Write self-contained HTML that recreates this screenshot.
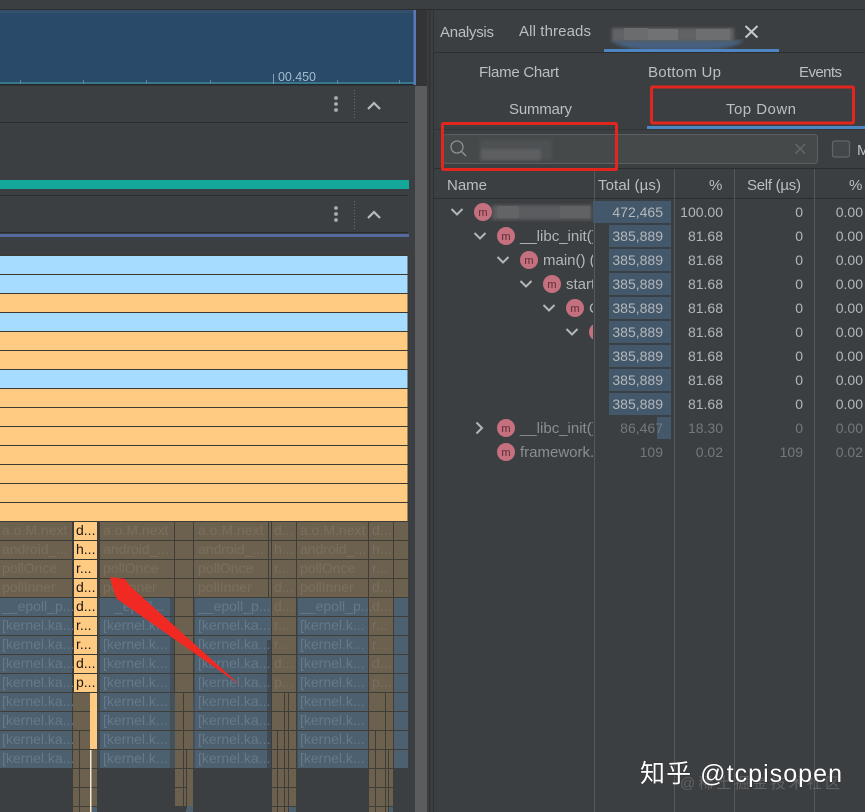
<!DOCTYPE html>
<html>
<head>
<meta charset="utf-8">
<style>
html,body{margin:0;padding:0;background:#3c3f41;width:865px;height:812px;overflow:hidden}
svg{display:block;font-family:"Liberation Sans","Noto Sans CJK SC",sans-serif;filter:blur(.3px)}
.d{fill:#7a6f5c;font-size:14px}
.k{fill:#65798a;font-size:14px}
.b{fill:#1c1710;font-size:14px}
.t{fill:#bcbfc1;font-size:15px}
.h{fill:#b4b7b9;font-size:15px}
.n{fill:#b4b7b9;font-size:14px;text-anchor:end}
.g{fill:#75787a;font-size:14px;text-anchor:end}
.m{fill:#5c2b33;font-size:11px;text-anchor:middle}
.c{fill:none;stroke:#b4b7b9;stroke-width:2}
</style>
</head>
<body>
<svg width="865" height="812" viewBox="0 0 865 812" xmlns="http://www.w3.org/2000/svg">
<defs>
<clipPath id="nc"><rect x="434" y="198" width="159" height="270"/></clipPath>
<filter id="bl"><feGaussianBlur stdDeviation="1.5"/></filter>
</defs>
<rect width="865" height="812" fill="#3c3f41"/>
<!-- top band -->
<rect x="0" y="9" width="865" height="1" fill="#2b2d2e"/>
<rect x="0" y="10" width="414" height="75" fill="#294a68"/>
<rect x="0" y="10" width="414" height="3" fill="#34506c"/>
<rect x="0" y="82" width="414" height="2" fill="#38788c"/>
<rect x="0" y="84" width="416" height="1.500" fill="#25282a"/>
<rect x="413.500" y="10" width="2.500" height="75" fill="#5b79b6"/>
<rect x="416" y="10" width="12" height="76" fill="#323435"/>
<g fill="#5f8296">
<rect x="20" y="80" width="1" height="4"/><rect x="83" y="80" width="1" height="4"/><rect x="146" y="80" width="1" height="4"/><rect x="210" y="80" width="1" height="4"/><rect x="337" y="80" width="1" height="4"/><rect x="399" y="80" width="1" height="4"/>
</g>
<rect x="273" y="74" width="1" height="10" fill="#7f9db2"/>
<text x="278" y="81" font-size="12.500" fill="#a2bbcf" textLength="38" lengthAdjust="spacing">00.450</text>
<!-- scrollbar -->
<rect x="415" y="86" width="12" height="726" fill="#5a5c5d"/>
<rect x="427" y="10" width="2" height="802" fill="#3a3c3e"/>
<rect x="429" y="10" width="1.500" height="802" fill="#313335"/>
<rect x="430.500" y="10" width="3" height="802" fill="#3c3f41"/>
<rect x="433" y="10" width="1" height="802" fill="#2f3132"/>
<!-- track headers -->
<rect x="0" y="122" width="408" height="1" fill="#2a2c2d"/>
<g fill="#a9abad">
<circle cx="336" cy="98" r="1.900"/><circle cx="336" cy="104" r="1.900"/><circle cx="336" cy="110" r="1.900"/>
<circle cx="336" cy="208" r="1.900"/><circle cx="336" cy="214" r="1.900"/><circle cx="336" cy="220" r="1.900"/>
</g>
<path d="M354.500 90V118M354.500 201V230" stroke="#6a6d6f" stroke-width="1" stroke-dasharray="1 2"/>
<path d="M368 109L374 103L380 109M368 218L374 212L380 218" fill="none" stroke="#b8babc" stroke-width="2.200"/>
<rect x="0" y="180" width="409" height="9" fill="#13a89a"/>
<rect x="0" y="195" width="408" height="1" fill="#2a2c2d"/>
<rect x="0" y="232" width="408" height="1" fill="#2a2c2d"/>
<rect x="0" y="234" width="409" height="3" fill="#56699e"/>
<!-- flame bright rows -->
<g stroke="#3d3a34" stroke-width="1">
<rect x="-1" y="255.500" width="409" height="19" fill="#a6dcff"/>
<rect x="-1" y="274.500" width="409" height="19" fill="#a6dcff"/>
<rect x="-1" y="293.500" width="409" height="19" fill="#ffcb82"/>
<rect x="-1" y="312.500" width="409" height="19" fill="#a6dcff"/>
<rect x="-1" y="331.500" width="409" height="19" fill="#ffcb82"/>
<rect x="-1" y="350.500" width="409" height="19" fill="#ffcb82"/>
<rect x="-1" y="369.500" width="409" height="19" fill="#a6dcff"/>
<rect x="-1" y="388.500" width="409" height="19" fill="#ffcb82"/>
<rect x="-1" y="407.500" width="409" height="19" fill="#ffcb82"/>
<rect x="-1" y="426.500" width="409" height="19" fill="#ffcb82"/>
<rect x="-1" y="445.500" width="409" height="19" fill="#ffcb82"/>
<rect x="-1" y="464.500" width="409" height="19" fill="#ffcb82"/>
<rect x="-1" y="483.500" width="409" height="19" fill="#ffcb82"/>
<rect x="-1" y="502.500" width="409" height="19" fill="#ffcb82"/>
</g>
<!-- dim lower band -->
<rect x="0" y="521" width="408" height="76" fill="#6c604e"/>
<rect x="0" y="597" width="408" height="171" fill="#4c6070"/>
<rect x="73" y="597" width="27" height="171" fill="#4a5560"/>
<rect x="170" y="597" width="5" height="171" fill="#44505a"/>
<rect x="193" y="597" width="2" height="171" fill="#44505a"/>
<rect x="267" y="640" width="5" height="128" fill="#3f4a54"/>
<rect x="296" y="597" width="2" height="171" fill="#44505a"/>
<rect x="368" y="597" width="2" height="171" fill="#44505a"/>
<!-- brown columns -->
<rect x="175" y="597" width="18" height="95" fill="#6c604e"/>
<rect x="271" y="597" width="25" height="95" fill="#6c604e"/>
<rect x="369" y="597" width="24" height="95" fill="#6c604e"/>
<rect x="73" y="692" width="24" height="120" fill="#6c604e"/>
<rect x="175" y="692" width="18" height="120" fill="#6c604e"/>
<rect x="272" y="692" width="24" height="120" fill="#6c604e"/>
<rect x="369" y="692" width="24" height="120" fill="#6c604e"/>
<rect x="92" y="806" width="5" height="6" fill="#4c6070"/>
<rect x="175" y="806" width="11" height="6" fill="#3c3f41"/>
<rect x="186" y="806" width="7" height="6" fill="#4c6070"/>
<rect x="288" y="806" width="8" height="6" fill="#4c6070"/>
<rect x="388" y="806" width="5" height="6" fill="#4c6070"/>
<!-- horizontal row lines -->
<g fill="#3f3d38">
<rect x="0" y="521" width="408" height="1"/><rect x="0" y="540" width="408" height="1"/><rect x="0" y="559" width="408" height="1"/><rect x="0" y="578" width="408" height="1"/><rect x="0" y="597" width="408" height="1"/><rect x="0" y="616" width="408" height="1"/><rect x="0" y="635" width="408" height="1"/><rect x="0" y="654" width="408" height="1"/><rect x="0" y="673" width="408" height="1"/><rect x="0" y="692" width="408" height="1"/><rect x="0" y="711" width="408" height="1"/><rect x="0" y="730" width="408" height="1"/><rect x="0" y="749" width="408" height="1"/>
<rect x="73" y="768" width="24" height="1"/><rect x="175" y="768" width="18" height="1"/><rect x="271" y="768" width="25" height="1"/><rect x="369" y="768" width="24" height="1"/>
<rect x="73" y="787" width="24" height="1"/><rect x="175" y="787" width="11" height="1"/><rect x="271" y="787" width="25" height="1"/><rect x="369" y="787" width="24" height="1"/>
<rect x="73" y="806" width="24" height="1"/><rect x="271" y="806" width="25" height="1"/><rect x="369" y="806" width="24" height="1"/>
</g>
<!-- vertical dividers -->
<g fill="#3f3d38">
<rect x="72" y="521" width="1" height="291"/><rect x="98" y="521" width="2" height="76"/><rect x="174" y="521" width="1" height="171"/><rect x="193" y="521" width="1" height="171"/><rect x="268" y="521" width="1" height="76"/><rect x="271" y="521" width="1" height="291"/><rect x="296" y="521" width="1" height="291"/><rect x="368" y="521" width="1" height="291"/><rect x="393" y="521" width="1" height="247"/>
<rect x="79" y="730" width="1" height="82"/><rect x="183" y="692" width="1" height="120"/><rect x="186" y="749" width="1" height="60"/><rect x="277" y="730" width="1" height="82"/><rect x="284" y="692" width="1" height="120"/><rect x="288" y="692" width="1" height="120"/><rect x="375" y="730" width="1" height="82"/><rect x="385" y="692" width="1" height="120"/><rect x="388" y="749" width="1" height="63"/>
</g>
<!-- bright yellow col -->
<g fill="#ffcb82" stroke="#3d3a34" stroke-width="1">
<rect x="73.500" y="521.500" width="24" height="19"/><rect x="73.500" y="540.500" width="24" height="19"/><rect x="73.500" y="559.500" width="24" height="19"/><rect x="73.500" y="578.500" width="24" height="19"/><rect x="73.500" y="597.500" width="24" height="19"/><rect x="73.500" y="616.500" width="24" height="19"/><rect x="73.500" y="635.500" width="24" height="19"/><rect x="73.500" y="654.500" width="24" height="19"/><rect x="73.500" y="673.500" width="24" height="19"/>
</g>
<rect x="90" y="693" width="7" height="56" fill="#ffcb82"/>
<rect x="90" y="750" width="1.500" height="62" fill="#f4e6c8"/>
<rect x="97" y="597" width="3" height="215" fill="#3c3f41" opacity=".55"/>
<!-- dim text -->
<text class="d" x="2" y="535">a.o.M.next</text><text class="d" x="2" y="554">android_...</text><text class="d" x="2" y="573">pollOnce</text><text class="d" x="2" y="592">pollInner</text>
<text class="k" x="2" y="611">__epoll_p...</text><text class="k" x="2" y="630">[kernel.ka...</text><text class="k" x="2" y="649">[kernel.ka...</text><text class="k" x="2" y="668">[kernel.ka...</text><text class="k" x="2" y="687">[kernel.ka...</text><text class="k" x="2" y="706">[kernel.ka...</text><text class="k" x="2" y="725">[kernel.ka...</text><text class="k" x="2" y="744">[kernel.ka...</text><text class="k" x="2" y="763">[kernel.ka...</text>
<text class="d" x="103" y="535">a.o.M.next</text><text class="d" x="103" y="554">android_...</text><text class="d" x="103" y="573">pollOnce</text><text class="d" x="103" y="592">pollInner</text>
<text class="k" x="115" y="611">_epoll...</text><text class="k" x="103" y="630">[kernel.k...</text><text class="k" x="103" y="649">[kernel.k...</text><text class="k" x="103" y="668">[kernel.k...</text><text class="k" x="103" y="687">[kernel.k...</text><text class="k" x="103" y="706">[kernel.k...</text><text class="k" x="103" y="725">[kernel.k...</text><text class="k" x="103" y="744">[kernel.k...</text><text class="k" x="103" y="763">[kernel.k...</text>
<text class="d" x="198" y="535">a.o.M.next</text><text class="d" x="198" y="554">android_...</text><text class="d" x="198" y="573">pollOnce</text><text class="d" x="198" y="592">pollInner</text>
<text class="k" x="198" y="611">__epoll_p...</text><text class="k" x="198" y="630">[kernel.ka...</text><text class="k" x="198" y="649">[kernel.ka...</text><text class="k" x="198" y="668">[kernel.ka...</text><text class="k" x="198" y="687">[kernel.ka...</text><text class="k" x="198" y="706">[kernel.ka...</text><text class="k" x="198" y="725">[kernel.ka...</text><text class="k" x="198" y="744">[kernel.ka...</text><text class="k" x="198" y="763">[kernel.ka...</text>
<text class="d" x="300" y="535">a.o.M.next</text><text class="d" x="300" y="554">android_...</text><text class="d" x="300" y="573">pollOnce</text><text class="d" x="300" y="592">pollInner</text>
<text class="k" x="300" y="611">__epoll_p...</text><text class="k" x="300" y="630">[kernel.k...</text><text class="k" x="300" y="649">[kernel.k...</text><text class="k" x="300" y="668">[kernel.k...</text><text class="k" x="300" y="687">[kernel.k...</text><text class="k" x="300" y="706">[kernel.k...</text><text class="k" x="300" y="725">[kernel.k...</text><text class="k" x="300" y="744">[kernel.k...</text><text class="k" x="300" y="763">[kernel.k...</text>
<text class="d" x="274" y="535">d...</text><text class="d" x="274" y="554">h...</text><text class="d" x="274" y="573">r...</text><text class="d" x="274" y="592">d...</text><text class="d" x="274" y="611">d...</text><text class="d" x="274" y="630">r...</text><text class="d" x="274" y="649">r...</text><text class="d" x="274" y="668">d...</text><text class="d" x="274" y="687">p...</text>
<text class="d" x="372" y="535">d...</text><text class="d" x="372" y="554">h...</text><text class="d" x="372" y="573">r...</text><text class="d" x="372" y="592">d...</text><text class="d" x="372" y="611">d...</text><text class="d" x="372" y="630">r...</text><text class="d" x="372" y="649">r...</text><text class="d" x="372" y="668">d...</text><text class="d" x="372" y="687">p...</text>
<text class="b" x="76" y="535">d...</text><text class="b" x="76" y="554">h...</text><text class="b" x="76" y="573">r...</text><text class="b" x="76" y="592">d...</text><text class="b" x="76" y="611">d...</text><text class="b" x="76" y="630">r...</text><text class="b" x="76" y="649">r...</text><text class="b" x="76" y="668">d...</text><text class="b" x="76" y="687">p...</text>
<!-- red arrow -->
<polygon points="110,577 125,579 130,586 240,685 117,599 114,592" fill="#f02a22"/>
<!-- right panel tabs -->
<rect x="434" y="52" width="431" height="1" fill="#2b2d2e"/>
<text class="t" x="440" y="37" textLength="54" lengthAdjust="spacing">Analysis</text>
<text class="t" x="519" y="36" textLength="72" lengthAdjust="spacing">All threads</text>
<path d="M610 40H744Q735 49 705 50H650Q620 49 610 40Z" fill="#46617f" filter="url(#bl)"/>
<rect x="612" y="28" width="122" height="13" fill="#626466" filter="url(#bl)"/>
<rect x="624" y="28" width="24" height="12" fill="#6a6c6e"/><rect x="648" y="29" width="30" height="11" fill="#707274"/><rect x="696" y="29" width="34" height="11" fill="#6c6e70"/>
<rect x="604" y="49" width="175" height="3" fill="#4e86c4"/>
<path d="M745.500 26L757.500 37.500M757.500 26L745.500 37.500" stroke="#c6c8ca" stroke-width="2"/>
<text class="t" x="479" y="77" textLength="80" lengthAdjust="spacing">Flame Chart</text>
<text class="t" x="648" y="77" textLength="73" lengthAdjust="spacing">Bottom Up</text>
<text class="t" x="799" y="77" textLength="43" lengthAdjust="spacing">Events</text>
<text class="t" x="509" y="114" textLength="63" lengthAdjust="spacing">Summary</text>
<text class="t" x="726" y="114" textLength="70" lengthAdjust="spacing">Top Down</text>
<rect x="647" y="126" width="218" height="3.500" fill="#4e86c4"/>
<rect x="434" y="129" width="431" height="1" fill="#323436"/>
<!-- search -->
<rect x="443.500" y="134.500" width="374" height="29" rx="3" fill="#45494a" stroke="#5b5f61"/>
<circle cx="457" cy="147" r="6" fill="none" stroke="#8e9092" stroke-width="1.300"/>
<path d="M461.500 151.500L466 156" stroke="#8e9092" stroke-width="1.500"/>
<rect x="480" y="140" width="72" height="20" fill="#4e5153" filter="url(#bl)"/>
<rect x="481" y="149" width="60" height="11" fill="#5d5f61" filter="url(#bl)"/>
<path d="M795.500 144L805 153.500M805 144L795.500 153.500" stroke="#65686a" stroke-width="1.500"/>
<rect x="832.500" y="141" width="17" height="16" rx="2" fill="#43474a" stroke="#626567" stroke-width="1.200"/>
<text class="t" x="857" y="155">M</text>
<!-- table header -->
<rect x="434" y="168" width="431" height="1" fill="#2b2d2e"/>
<rect x="434" y="198" width="431" height="1" fill="#2b2d2e"/>
<g fill="#56595b">
<rect x="594" y="169" width="1" height="643"/><rect x="674" y="169" width="1" height="643"/><rect x="734" y="169" width="1" height="643"/><rect x="814" y="169" width="1" height="643"/>
</g>
<text class="t" x="447" y="190" textLength="40" lengthAdjust="spacing">Name</text>
<text class="t" x="598" y="190" textLength="63" lengthAdjust="spacing">Total (µs)</text>
<text class="t" x="709" y="190">%</text>
<text class="t" x="747" y="190" textLength="54" lengthAdjust="spacing">Self (µs)</text>
<text class="t" x="849" y="190">%</text>
<!-- bars -->
<g fill="#44586b">
<rect x="593" y="201" width="78" height="22"/><rect x="609" y="225" width="62" height="22"/><rect x="609" y="249" width="62" height="22"/><rect x="609" y="273" width="62" height="22"/><rect x="609" y="297" width="62" height="22"/><rect x="609" y="321" width="62" height="22"/><rect x="609" y="345" width="62" height="22"/><rect x="609" y="369" width="62" height="22"/><rect x="609" y="393" width="62" height="22"/><rect x="657" y="417" width="14" height="22"/>
</g>
<!-- name column -->
<g clip-path="url(#nc)">
<rect x="492" y="205" width="100" height="15" fill="#5a5c5e" filter="url(#bl)"/>
<rect x="497" y="206" width="22" height="12" fill="#626466"/><rect x="560" y="206" width="30" height="12" fill="#606264"/>
<circle cx="483" cy="212" r="9" fill="#c4707e"/><text class="m" x="483" y="216">m</text>
<circle cx="506" cy="236" r="9" fill="#c4707e"/><text class="m" x="506" y="240">m</text>
<text class="h" x="520" y="241">__libc_init()</text>
<circle cx="529" cy="260" r="9" fill="#c4707e"/><text class="m" x="529" y="264">m</text>
<text class="h" x="543" y="265">main() (</text>
<circle cx="552" cy="284" r="9" fill="#c4707e"/><text class="m" x="552" y="288">m</text>
<text class="h" x="566" y="289">start</text>
<circle cx="575" cy="308" r="9" fill="#c4707e"/><text class="m" x="575" y="312">m</text>
<text class="h" x="589" y="313">C</text>
<circle cx="598" cy="332" r="9" fill="#c4707e"/>
<circle cx="506" cy="428" r="9" fill="#c4707e"/><text class="m" x="506" y="432">m</text>
<text x="520" y="433" font-size="15" fill="#8b8e90">__libc_init()</text>
<circle cx="506" cy="452" r="9" fill="#c4707e"/><text class="m" x="506" y="456">m</text>
<text x="520" y="457" font-size="15" fill="#8b8e90">framework.</text>
</g>
<path class="c" d="M451.500 209L457 214.500L462.500 209"/>
<path class="c" d="M474.500 233L480 238.500L485.500 233"/>
<path class="c" d="M497.500 257L503 262.500L508.500 257"/>
<path class="c" d="M520.500 281L526 286.500L531.500 281"/>
<path class="c" d="M543.500 305L549 310.500L554.500 305"/>
<path class="c" d="M566.500 329L572 334.500L577.500 329"/>
<path class="c" d="M476.500 422.500L482 428L476.500 433.500"/>
<!-- numbers -->
<text class="n" x="663" y="217">472,465</text><text class="n" x="723" y="217">100.00</text><text class="n" x="803" y="217">0</text><text class="n" x="863" y="217">0.00</text>
<text class="n" x="663" y="241">385,889</text><text class="n" x="723" y="241">81.68</text><text class="n" x="803" y="241">0</text><text class="n" x="863" y="241">0.00</text>
<text class="n" x="663" y="265">385,889</text><text class="n" x="723" y="265">81.68</text><text class="n" x="803" y="265">0</text><text class="n" x="863" y="265">0.00</text>
<text class="n" x="663" y="289">385,889</text><text class="n" x="723" y="289">81.68</text><text class="n" x="803" y="289">0</text><text class="n" x="863" y="289">0.00</text>
<text class="n" x="663" y="313">385,889</text><text class="n" x="723" y="313">81.68</text><text class="n" x="803" y="313">0</text><text class="n" x="863" y="313">0.00</text>
<text class="n" x="663" y="337">385,889</text><text class="n" x="723" y="337">81.68</text><text class="n" x="803" y="337">0</text><text class="n" x="863" y="337">0.00</text>
<text class="n" x="663" y="361">385,889</text><text class="n" x="723" y="361">81.68</text><text class="n" x="803" y="361">0</text><text class="n" x="863" y="361">0.00</text>
<text class="n" x="663" y="385">385,889</text><text class="n" x="723" y="385">81.68</text><text class="n" x="803" y="385">0</text><text class="n" x="863" y="385">0.00</text>
<text class="n" x="663" y="409">385,889</text><text class="n" x="723" y="409">81.68</text><text class="n" x="803" y="409">0</text><text class="n" x="863" y="409">0.00</text>
<text class="g" x="663" y="433">86,467</text><text class="g" x="723" y="433">18.30</text><text class="g" x="803" y="433">0</text><text class="g" x="863" y="433">0.00</text>
<text class="g" x="663" y="457">109</text><text class="g" x="723" y="457">0.02</text><text class="g" x="803" y="457">109</text><text class="g" x="863" y="457">0.02</text>
<!-- red boxes -->
<rect x="651.500" y="87" width="202" height="36" rx="1" fill="none" stroke="#e0261f" stroke-width="3"/>
<rect x="442.500" y="123.500" width="174" height="46" rx="1" fill="none" stroke="#e0261f" stroke-width="3"/>
<!-- watermark -->
<text x="680" y="788" font-size="15" fill="#5f6163" textLength="160" lengthAdjust="spacing">@稀土掘金技术社区</text>
<text x="640" y="782" font-size="25" fill="#ffffff" stroke="#2e3032" stroke-width="1" style="paint-order:stroke" textLength="202" lengthAdjust="spacing">知乎 @tcpisopen</text>
</svg>
</body>
</html>
